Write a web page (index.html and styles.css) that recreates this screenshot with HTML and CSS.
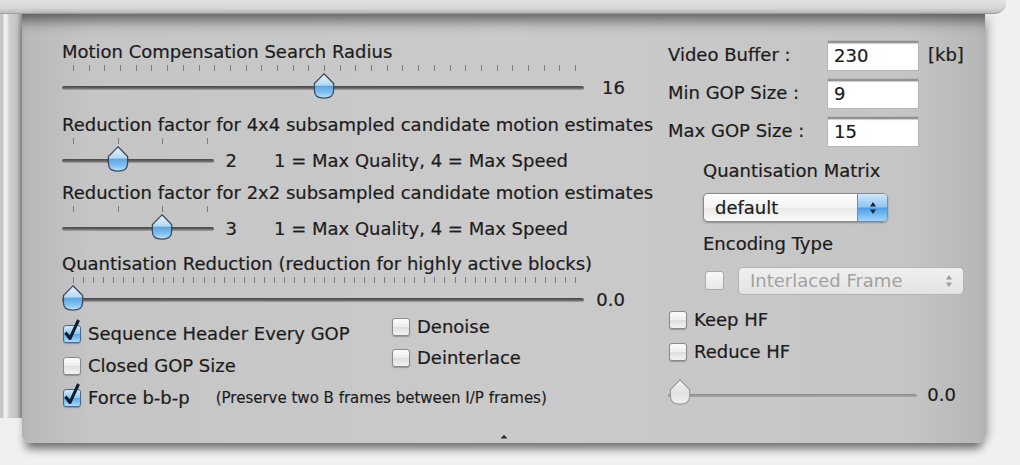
FILE: index.html
```html
<!DOCTYPE html>
<html>
<head>
<meta charset="utf-8">
<link rel="stylesheet" href="styles.css">
</head>
<body>
<svg class="defs" width="0" height="0">
  <defs>
    <linearGradient id="tg" x1="0" y1="0" x2="0" y2="1">
      <stop offset="0" stop-color="#eef6fc"/>
      <stop offset="0.46" stop-color="#b4d8f3"/>
      <stop offset="0.52" stop-color="#5fa6e3"/>
      <stop offset="0.8" stop-color="#86c3f1"/>
      <stop offset="1" stop-color="#c4e7fc"/>
    </linearGradient>
    <linearGradient id="tgd" x1="0" y1="0" x2="0" y2="1">
      <stop offset="0" stop-color="#f6f6f6"/>
      <stop offset="0.5" stop-color="#e2e2e2"/>
      <stop offset="1" stop-color="#f0f0f0"/>
    </linearGradient>
  </defs>
</svg>
<div class="topbar"></div>
<div class="main">
  <div class="strip"></div>
  <div class="panel">
    <div class="cols">
      <div class="col-left">
        <div class="lbl">Motion Compensation Search Radius</div>
        <div class="srow">
          <div class="slider long">
            <div class="ticks t32"></div>
            <div class="track"></div>
            <svg class="thumb" viewBox="0 0 22 26" width="22" height="26" style="left:251px"><path d="M11 .8 L20.6 10.5 V17.5 Q20.6 25.2 11 25.2 Q1.4 25.2 1.4 17.5 V10.5 Z" fill="url(#tg)" stroke="#3b4a5c" stroke-width="1.3"/></svg>
          </div>
          <span class="val vlong">16</span>
        </div>

        <div class="lbl g13">Reduction factor for 4x4 subsampled candidate motion estimates</div>
        <div class="srow">
          <div class="slider short">
            <div class="ticks t4"></div>
            <div class="track"></div>
            <svg class="thumb" viewBox="0 0 22 26" width="22" height="26" style="left:45px"><path d="M11 .8 L20.6 10.5 V17.5 Q20.6 25.2 11 25.2 Q1.4 25.2 1.4 17.5 V10.5 Z" fill="url(#tg)" stroke="#3b4a5c" stroke-width="1.3"/></svg>
          </div>
          <span class="val vshort">2</span>
          <span class="hint">1 = Max Quality, 4 = Max Speed</span>
        </div>

        <div class="lbl g8">Reduction factor for 2x2 subsampled candidate motion estimates</div>
        <div class="srow">
          <div class="slider short">
            <div class="ticks t4"></div>
            <div class="track"></div>
            <svg class="thumb" viewBox="0 0 22 26" width="22" height="26" style="left:89px"><path d="M11 .8 L20.6 10.5 V17.5 Q20.6 25.2 11 25.2 Q1.4 25.2 1.4 17.5 V10.5 Z" fill="url(#tg)" stroke="#3b4a5c" stroke-width="1.3"/></svg>
          </div>
          <span class="val vshort">3</span>
          <span class="hint">1 = Max Quality, 4 = Max Speed</span>
        </div>

        <div class="lbl g11">Quantisation Reduction (reduction for highly active blocks)</div>
        <div class="srow last">
          <div class="slider long">
            <div class="ticks t50"></div>
            <div class="track"></div>
            <svg class="thumb" viewBox="0 0 22 26" width="22" height="26" style="left:0px"><path d="M11 .8 L20.6 10.5 V17.5 Q20.6 25.2 11 25.2 Q1.4 25.2 1.4 17.5 V10.5 Z" fill="url(#tg)" stroke="#3b4a5c" stroke-width="1.3"/></svg>
          </div>
          <span class="val vlong">0.0</span>
        </div>

        <div class="checks">
          <div class="chk-left">
            <div class="crow"><span class="cb on"><svg viewBox="0 0 20 20" width="20" height="20"><path d="M3.5 8.5 L8 14.5 L16.5 -4" fill="none" stroke="#0f1c36" stroke-width="3" stroke-linejoin="round"/></svg></span>Sequence Header Every GOP</div>
            <div class="crow"><span class="cb"></span>Closed GOP Size</div>
            <div class="crow"><span class="cb on"><svg viewBox="0 0 20 20" width="20" height="20"><path d="M3.5 8.5 L8 14.5 L16.5 -4" fill="none" stroke="#0f1c36" stroke-width="3" stroke-linejoin="round"/></svg></span>Force b-b-p<span class="note">(Preserve two B frames between I/P frames)</span></div>
          </div>
          <div class="chk-right">
            <div class="crow r"><span class="cb"></span>Denoise</div>
            <div class="crow r"><span class="cb"></span>Deinterlace</div>
          </div>
        </div>
      </div>

      <div class="col-right">
        <div class="frow"><span class="flbl">Video Buffer :</span><span class="field">230</span><span class="unit">[kb]</span></div>
        <div class="frow"><span class="flbl">Min GOP Size :</span><span class="field">9</span></div>
        <div class="frow"><span class="flbl">Max GOP Size :</span><span class="field">15</span></div>

        <div class="sub-lbl first">Quantisation Matrix</div>
        <div class="popup">
          <span class="ptext">default</span>
          <span class="stepper"><svg viewBox="0 0 10 16" width="10" height="16"><path d="M5 2 L8 6.5 H2 Z M5 14 L8 9.5 H2 Z" fill="#14233a"/></svg></span>
        </div>

        <div class="sub-lbl">Encoding Type</div>
        <div class="enc-row">
          <span class="cb dis"></span>
          <div class="popup dis">
            <span class="ptext">Interlaced Frame</span>
            <span class="stepper"><svg viewBox="0 0 10 16" width="10" height="16"><path d="M5 2 L8 6.5 H2 Z M5 14 L8 9.5 H2 Z" fill="#9c9c9c"/></svg></span>
          </div>
        </div>

        <div class="crow hf first"><span class="cb"></span>Keep HF</div>
        <div class="crow hf"><span class="cb"></span>Reduce HF</div>

        <div class="srow hfs">
          <div class="slider side">
            <div class="track thin"></div>
            <svg class="thumb" viewBox="0 0 22 26" width="22" height="26" style="left:1px"><path d="M11 .8 L20.6 10.5 V17.5 Q20.6 25.2 11 25.2 Q1.4 25.2 1.4 17.5 V10.5 Z" fill="url(#tgd)" stroke="#9a9a9a" stroke-width="1.2"/></svg>
          </div>
          <span class="val vside">0.0</span>
        </div>
      </div>
    </div>
    <div class="caret"><svg viewBox="0 0 8 5" width="8" height="5"><path d="M0.5 4.5 L4 0.8 L7.5 4.5 Z" fill="#2a2a2a"/></svg></div>
  </div>
</div>
</body>
</html>
```
FILE: styles.css
```css
* { box-sizing: border-box; }

body {
  margin: 0;
  width: 1020px;
  height: 465px;
  overflow: hidden;
  background: #f0f0f0;
  font-family: "DejaVu Sans", "Liberation Sans", sans-serif;
  font-size: 18px;
  line-height: 20px;
  color: #1c1c1c;
  -webkit-text-stroke: 0.2px #1c1c1c;
}

.defs { display: block; width: 0; height: 0; }

.topbar {
  height: 14px;
  width: 1006px;
  background: linear-gradient(#e3e3e3, #d5d5d5 65%, #bcbcbc);
  border-bottom: 1px solid #a2a2a2;
  border-bottom-right-radius: 12px;
}

.main { display: flex; height: 451px; }

.strip {
  width: 22px;
  height: 404px;
  background: linear-gradient(90deg, #c6c6c6 0, #c6c6c6 3px, #ededed 4px, #ededed 7px, #cfcfcf 9px, #c3c3c3 17px, #909090 22px);
}

.panel {
  width: 963px;
  height: 429px;
  flex-shrink: 0;
  display: flex;
  flex-direction: column;
  padding: 28px 40px 0 40px;
  background: linear-gradient(90deg, #b8b8b8, #c5c5c5 7%, #cacaca 50%, #c5c5c5 92%, #b6b6b6);
  box-shadow: inset 0 16px 14px -10px rgba(0,0,0,.55), 0 9px 8px -3px rgba(0,0,0,.5), 7px 0 10px -3px rgba(0,0,0,.22);
  border-radius: 0 0 8px 8px;
}

.cols { display: flex; height: 392px; }

.col-left { width: 606px; flex-shrink: 0; display: flex; flex-direction: column; }
.col-right { width: 300px; flex-shrink: 0; display: flex; flex-direction: column; margin-top: -6px; }

.lbl { height: 20px; white-space: nowrap; }
.g13 { margin-top: 13px; }
.g8 { margin-top: 8px; }
.g11 { margin-top: 11px; }

.srow { display: flex; height: 40px; white-space: nowrap; }
.srow.last { height: 37px; }

.slider { position: relative; height: 40px; flex-shrink: 0; }
.slider.long { width: 522px; }
.slider.short { width: 152px; }

.ticks {
  position: absolute;
  left: 11px;
  top: 3px;
  height: 6px;
}
.t32 { width: 503px; background: repeating-linear-gradient(90deg, #7c7c7c 0 1px, transparent 1px 15.69px); }
.t50 { width: 503px; background: repeating-linear-gradient(90deg, #7c7c7c 0 1px, transparent 1px 10.04px); }
.t4 { width: 136px; background: repeating-linear-gradient(90deg, #7c7c7c 0 1px, transparent 1px 44.67px); }

.track {
  position: absolute;
  left: 0;
  right: 0;
  top: 24px;
  height: 4px;
  border-radius: 2px;
  background: linear-gradient(#474747, #626262 50%, #a9a9a9);
}
.track.thin {
  top: 18px;
  height: 3px;
  background: linear-gradient(#8c8c8c, #a8a8a8);
}

.thumb { position: absolute; top: 11px; overflow: visible; }

.val { padding-top: 16px; text-align: right; }
.vlong { width: 41px; }
.vshort { width: 23px; }
.hint { padding-top: 16px; margin-left: 37px; }

.checks { display: flex; }
.chk-left { width: 330px; padding-top: 7px; flex-shrink: 0; }
.chk-right { display: flex; flex-direction: column; }

.crow {
  height: 32px;
  display: flex;
  align-items: center;
  gap: 7px;
  white-space: nowrap;
  padding-left: 1px;
}
.crow.r { height: 31px; padding-left: 0; }

.cb {
  width: 18px;
  height: 18px;
  flex-shrink: 0;
  border: 1px solid #8a8a8a;
  border-radius: 3px;
  background: linear-gradient(#fdfdfd, #ececec 50%, #dddddd 51%, #f3f3f3);
  box-shadow: 0 1px 1px rgba(0,0,0,.25);
  -webkit-text-stroke: 0;
}
.cb.on {
  border-color: #4a6a8c;
  background: linear-gradient(#d3eafb, #94c9f1 48%, #5ba8ea 52%, #a9dbfb);
}
.cb svg { display: block; margin: -2px 0 0 -2px; overflow: visible; }
.cb.dis {
  width: 19px;
  height: 19px;
  border-color: #a8a8a8;
  background: linear-gradient(#f7f7f7, #e8e8e8);
  box-shadow: none;
}

.note { font-size: 15px; margin-left: 19px; -webkit-text-stroke: 0.15px #1c1c1c; }

.frow { height: 38px; display: flex; align-items: center; white-space: nowrap; }
.flbl { width: 160px; }
.field {
  width: 90px;
  height: 29px;
  display: flex;
  align-items: center;
  padding-left: 6px;
  background: #ffffff;
  border-top: 2px solid #939393;
  box-shadow: inset 0 1px 1px rgba(0,0,0,.2), 0 0 0 1px rgba(0,0,0,.07);
}
.unit { margin-left: 10px; }

.sub-lbl { margin: 12px 0 0 35px; height: 20px; white-space: nowrap; }
.sub-lbl.first { margin-top: 11px; }

.popup {
  margin: 12px 0 0 35px;
  width: 185px;
  height: 29px;
  display: flex;
  align-items: center;
  border: 1px solid #8a8a8a;
  border-radius: 5px;
  background: linear-gradient(#ffffff, #f3f3f3 50%, #e9e9e9 51%, #fafafa);
  box-shadow: 0 1px 2px rgba(0,0,0,.3);
  overflow: hidden;
}
.ptext { flex: 1; padding-left: 11px; white-space: nowrap; }
.stepper {
  width: 30px;
  height: 100%;
  display: flex;
  align-items: center;
  justify-content: center;
  border-left: 1px solid #6d8db0;
  background: linear-gradient(#cde6fb, #90c5f1 48%, #4f9ee6 52%, #9fd4fa);
}

.enc-row {
  margin-top: 12px;
  height: 29px;
  display: flex;
  align-items: center;
  gap: 14px;
  padding-left: 37px;
}
.popup.dis {
  margin: 0;
  width: 226px;
  height: 28px;
  border-color: #b4b4b4;
  background: linear-gradient(#f0f0f0, #e3e3e3);
  box-shadow: none;
  color: #a2a2a2;
  -webkit-text-stroke: 0;
}
.popup.dis .stepper { background: none; border-left: none; width: 28px; }

.crow.hf { padding-left: 1px; }
.crow.hf.first { margin-top: 9px; }

.srow.hfs { margin-top: 8px; height: 32px; }
.slider.side { width: 249px; height: 32px; }
.slider.side .thumb { top: 3px; }
.vside { width: 39px; padding-top: 9px; }

.caret { display: flex; justify-content: center; height: 6px; }
.caret svg { display: block; }
```
